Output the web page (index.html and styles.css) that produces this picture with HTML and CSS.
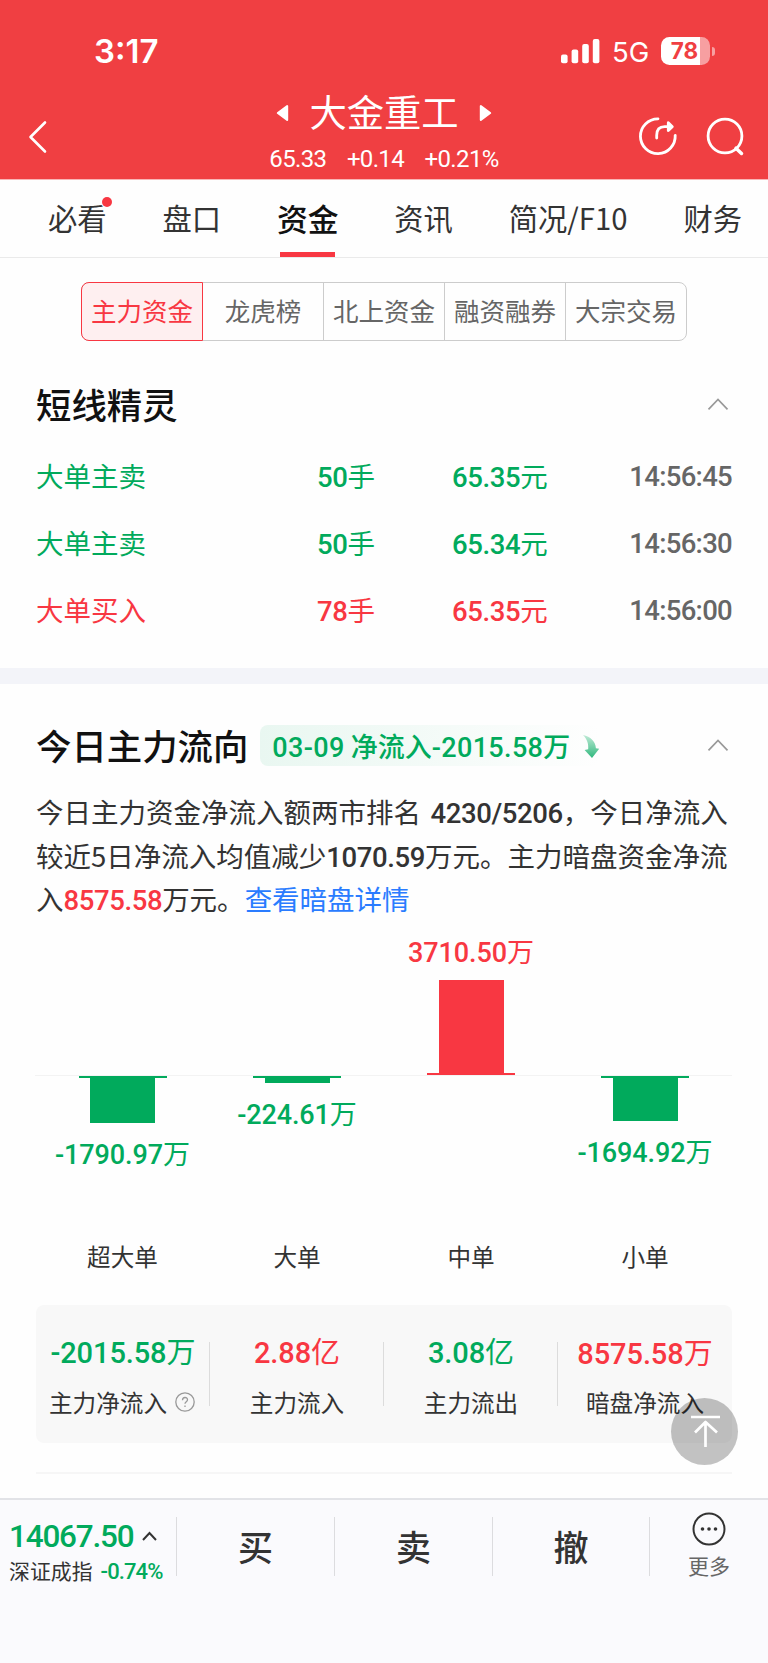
FILE: index.html
```html
<!DOCTYPE html>
<html lang="zh-CN">
<head>
<meta charset="utf-8">
<title>大金重工</title>
<link rel="stylesheet" href="styles.css">
</head>
<body>
<header class="header">
  <div class="status">
    <span class="clock">3:17</span>
    <div class="status-right">
      <svg class="signal" width="39" height="25" viewBox="0 0 39 25" fill="#fff"><rect x="0" y="15.5" width="6.6" height="8.7" rx="2"/><rect x="10.6" y="10.5" width="6.6" height="13.7" rx="2"/><rect x="21.2" y="5" width="6.6" height="19.2" rx="2"/><rect x="31.8" y="0" width="6.6" height="24.2" rx="2"/></svg>
      <span class="network">5G</span>
      <div class="battery"><span class="battery-body">78</span><span class="battery-nub"></span></div>
    </div>
  </div>
  <div class="titlebar">
    <svg class="back" width="20" height="34" viewBox="0 0 20 34" fill="none" stroke="#fff" stroke-width="2.6" stroke-linecap="round" stroke-linejoin="round"><path d="M17 2.5 2.5 17 17 31.5"/></svg>
    <div class="stock">
      <div class="stock-name">
        <svg width="13" height="18" viewBox="0 0 13 18" fill="#fff" stroke="#fff" stroke-width="2" stroke-linejoin="round"><path d="M11.2 2v14L1.8 9z"/></svg>
        <h1>大金重工</h1>
        <svg width="13" height="18" viewBox="0 0 13 18" fill="#fff" stroke="#fff" stroke-width="2" stroke-linejoin="round"><path d="M1.8 2v14l9.4-7z"/></svg>
      </div>
      <div class="quote"><span>65.33</span><span>+0.14</span><span>+0.21%</span></div>
    </div>
    <div class="tools">
      <svg width="40" height="40" viewBox="0 0 40 40" fill="none" stroke="#fff" stroke-width="2.8" stroke-linecap="round" stroke-linejoin="round"><path d="M20 2.8A17.4 17.4 0 1 0 37.2 19.3"/><path d="M18.7 22v-2.7c0-5.6 3-8.7 8-8.7h6"/><path d="M30.3 6.7 34.3 10.8 30.3 14.6z" fill="#fff"/></svg>
      <svg width="40" height="40" viewBox="0 0 40 40" fill="none" stroke="#fff" stroke-width="2.8" stroke-linecap="round"><circle cx="20" cy="20" r="16.9"/><path d="M31 32.2 36.5 37.5" stroke-width="3.5"/></svg>
    </div>
  </div>
</header>

<nav class="tabs">
  <a class="tab tab-new">必看</a><a class="tab">盘口</a><a class="tab tab-active">资金</a><a class="tab">资讯</a><a class="tab">简况/F10</a><a class="tab">财务</a>
</nav>

<div class="segments">
  <span class="segment segment-active">主力资金</span><span class="segment">龙虎榜</span><span class="segment">北上资金</span><span class="segment">融资融券</span><span class="segment">大宗交易</span>
</div>

<section class="alerts">
  <div class="section-head">
    <h2>短线精灵</h2>
    <svg class="chevron" width="22" height="14" viewBox="0 0 22 14" fill="none" stroke="#999" stroke-width="1.7"><path d="M1.5 12.3 11 2.5l9.5 9.8"/></svg>
  </div>
  <div class="row down"><span>大单主卖</span><span><b class="num">50</b>手</span><span><b class="num">65.35</b>元</span><span class="time num">14:56:45</span></div>
  <div class="row down"><span>大单主卖</span><span><b class="num">50</b>手</span><span><b class="num">65.34</b>元</span><span class="time num">14:56:30</span></div>
  <div class="row up"><span>大单买入</span><span><b class="num">78</b>手</span><span><b class="num">65.35</b>元</span><span class="time num">14:56:00</span></div>
</section>

<section class="flow">
  <div class="section-head">
    <h2>今日主力流向</h2>
    <div class="flow-badge"><span><b class="num">03-09</b> 净流入<b class="num">-2015.58</b>万</span>
      <svg width="18" height="25" viewBox="0 0 18 25"><defs><linearGradient id="drop" x1="0" y1="0" x2="0" y2="1"><stop offset="0" stop-color="#bfead6"/><stop offset="1" stop-color="#2fb87d"/></linearGradient></defs><path d="M1 1C8.5 2.5 13.6 7.5 13.9 14.2L17.2 14.8 10 24 2.6 16l3.6-.7C6.7 10 5.2 5 1 1z" fill="url(#drop)"/></svg>
    </div>
    <svg class="chevron" width="22" height="14" viewBox="0 0 22 14" fill="none" stroke="#999" stroke-width="1.7"><path d="M1.5 12.3 11 2.5l9.5 9.8"/></svg>
  </div>
  <div class="summary">
    <p>今日主力资金净流入额两市排名 <b class="num rank">4230/5206</b>，今日净流入</p>
    <p>较近5日净流入均值减少<b class="num">1070.59</b>万元。主力暗盘资金净流</p>
    <p>入<b class="num up">8575.58</b>万元。<a>查看暗盘详情</a></p>
  </div>

  <div class="chart">
    <div class="col down"><div class="above"></div><div class="below"><i class="cap"></i><i class="bar" style="height:45px"></i><span><b class="num">-1790.97</b>万</span></div><em>超大单</em></div>
    <div class="col down"><div class="above"></div><div class="below"><i class="cap"></i><i class="bar" style="height:5px"></i><span><b class="num">-224.61</b>万</span></div><em>大单</em></div>
    <div class="col up"><div class="above"><span><b class="num">3710.50</b>万</span><i class="bar" style="height:93px"></i><i class="cap"></i></div><div class="below"></div><em>中单</em></div>
    <div class="col down"><div class="above"></div><div class="below"><i class="cap"></i><i class="bar" style="height:43px"></i><span><b class="num">-1694.92</b>万</span></div><em>小单</em></div>
  </div>

  <div class="totals">
    <div class="total"><strong class="down"><b class="num">-2015.58</b>万</strong><span>主力净流入<svg width="20" height="20" viewBox="0 0 20 20" fill="none" stroke="#999" stroke-width="1.3"><circle cx="10" cy="10" r="9.2"/><path d="M7.5 8.2c0-3.6 5-3.5 5-.4 0 1.8-2.5 2-2.5 4M10 13.4v1.5"/></svg></span></div>
    <div class="total"><strong class="up"><b class="num">2.88</b>亿</strong><span>主力流入</span></div>
    <div class="total"><strong class="down"><b class="num">3.08</b>亿</strong><span>主力流出</span></div>
    <div class="total"><strong class="up"><b class="num">8575.58</b>万</strong><span>暗盘净流入</span></div>
  </div>
  <div class="rule"></div>
</section>

<button class="to-top"><svg width="32" height="34" viewBox="0 0 32 34" fill="none" stroke="#fff" stroke-width="2.7"><path d="M1 2h29M15.5 32V6.5M5 17.5 15.5 7 27 17.5" stroke-linejoin="round"/></svg></button>

<footer class="actions">
  <div class="index">
    <div class="index-value"><b class="num">14067.50</b><svg width="15" height="10" viewBox="0 0 15 10" fill="none" stroke="#333" stroke-width="2"><path d="M1 9 7.5 2 14 9"/></svg></div>
    <div class="index-name">深证成指<b class="num">-0.74%</b></div>
  </div>
  <a class="action">买</a><a class="action">卖</a><a class="action">撤</a>
  <a class="more"><svg width="34" height="34" viewBox="0 0 34 34"><circle cx="17" cy="17" r="15.5" fill="none" stroke="#333" stroke-width="2"/><g fill="#333"><circle cx="10.5" cy="17" r="1.8"/><circle cx="17" cy="17" r="1.8"/><circle cx="23.5" cy="17" r="1.8"/></g></svg><span>更多</span></a>
</footer>
</body>
</html>
```

FILE: styles.css
```css
* { box-sizing: border-box; }

body {
  margin: 0;
  width: 768px;
  height: 1663px;
  position: relative;
  overflow: hidden;
  display: flex;
  flex-direction: column;
  background: #fefefe;
  color: #333;
  font-family: "Noto Sans CJK SC", sans-serif;
  font-size: 27.5px;
  white-space: nowrap;
}

h1, h2, p { margin: 0; }
i, em { font-style: normal; }
svg { display: block; flex: none; }

.num {
  font-family: Roboto, "Noto Sans CJK SC", sans-serif;
  font-weight: 500;
  letter-spacing: -0.4px;
}
b.num { line-height: 0; }
.up { color: #f83742; }
.down { color: #01aa5c; }

.header {
  height: 180px;
  flex: none;
  background: #f03f42;
  border-bottom: 1px solid #f9b5b6;
  color: #fff;
}
.status {
  height: 90px;
  padding: 12px 53px 0 94px;
  display: flex;
  align-items: center;
  justify-content: space-between;
  font-family: Inter, sans-serif;
}
.clock { font-size: 33px; font-weight: 600; line-height: 40px; }
.status-right { display: flex; align-items: center; }
.network { margin-left: 12px; font-size: 27.5px; line-height: 34px; width: 49px; padding-top: 2px; }
.battery { display: flex; align-items: center; }
.battery-body {
  width: 49px;
  height: 28px;
  padding-right: 2px;
  border-radius: 8.5px;
  background: linear-gradient(90deg, #fff 39px, #f79fa1 39px);
  color: #f03f42;
  font-size: 22.5px;
  font-weight: 700;
  line-height: 28px;
  text-align: center;
}
.battery-nub { width: 3px; height: 9px; margin-left: 2px; border-radius: 0 4px 4px 0; background: #f79fa1; }

.titlebar {
  height: 89px;
  display: grid;
  grid-template-columns: 200px 1fr 200px;
}
.back { margin: 30px 0 0 28px; }
.stock { display: flex; flex-direction: column; align-items: center; }
.stock-name { display: flex; align-items: center; gap: 20px; height: 45px; }
.stock-name h1 { font-size: 37.3px; font-weight: 400; line-height: 46px; padding-bottom: 3px; }
.quote {
  display: flex;
  gap: 20.5px;
  margin-top: 9px;
  font: 400 24px/30px Roboto, sans-serif;
  letter-spacing: -0.65px;
}
.tools { display: flex; gap: 27px; padding: 26px 0 0 69.5px; }

.tabs {
  height: 78px;
  flex: none;
  display: flex;
  justify-content: space-between;
  padding: 0 26px 0 48px;
  border-bottom: 1px solid #eaeaea;
  font-size: 29.3px;
  line-height: 75px;
}
.tab { position: relative; height: 78px; }
.tab-new::after {
  content: "";
  position: absolute;
  top: 17px;
  right: -5px;
  width: 10px;
  height: 10px;
  border-radius: 50%;
  background: #f83742;
}
.tab-active { font-size: 30.8px; font-weight: 500; color: #111; }
.tab-active::after {
  content: "";
  position: absolute;
  left: 3px;
  bottom: 1px;
  width: 55px;
  height: 5px;
  background: #f83742;
}

.segments {
  flex: none;
  display: flex;
  width: 606px;
  height: 59px;
  margin: 24px 0 0 81px;
  border: 1px solid #ccc;
  border-radius: 8px;
  color: #666;
  font-size: 25.5px;
  line-height: 54px;
}
.segment { flex: 1; text-align: center; border-left: 1px solid #ccc; }
.segment-active {
  margin: -1px 0;
  margin-left: -1px;
  border: 1px solid #f83742;
  border-radius: 8px 0 0 8px;
  background: #feeff0;
  color: #f83742;
}
.segment-active + .segment { border-left: 0; }

.section-head { display: flex; align-items: center; height: 50px; padding-right: 3px; }
.section-head h2 { font-size: 35.4px; font-weight: 500; line-height: 50px; padding-bottom: 1px; color: #111; }
.chevron { margin-left: auto; }

.alerts { flex: none; height: 343px; padding: 38px 36px 0; border-bottom: 16px solid #f3f4f9; }
.alerts .section-head { margin-bottom: 13px; }
.row {
  display: grid;
  grid-template-columns: 281px 135px 1fr auto;
  height: 67px;
  line-height: 67px;
}
.time { color: #666; letter-spacing: -0.7px; padding-top: 1px; }

.flow { flex: none; height: 814px; padding: 36px 36px 0; }
.flow-badge {
  display: flex;
  align-items: center;
  gap: 12px;
  height: 41px;
  margin-left: 12px;
  padding: 0 0 0 12px;
  border-radius: 8px;
  background: linear-gradient(90deg, #e9f7f1, #fefefe);
  color: #01aa5c;
  font-size: 27px;
  font-weight: 500;
  line-height: 41px;
}
.flow-badge .num { letter-spacing: 0.35px; }
.flow-badge svg { margin-top: 2px; }
.summary { margin-top: 20px; line-height: 43.5px; }
.summary a { color: #2a7cff; }
.rank { margin-left: 3.4px; }

.chart { display: grid; grid-template-columns: repeat(4, 1fr); margin-top: 12px; }
.col { display: flex; flex-direction: column; align-items: center; }
.col:first-child { margin-left: -1px; }
.above, .below { width: 100%; display: flex; flex-direction: column; align-items: center; }
.above { height: 143px; justify-content: flex-end; border-bottom: 1px solid #f3f3f3; }
.below { height: 160px; }
.cap { width: 88px; height: 2px; flex: none; background: currentColor; }
.bar { width: 65px; flex: none; background: currentColor; }
.chart span { line-height: 30px; font-size: 27px; }
.chart .num { letter-spacing: -0.1px; }
.below span { margin-top: 15px; }
.above span { margin-bottom: 14px; }
.chart em { font-size: 23.6px; line-height: 40px; color: #333; }

.totals {
  display: grid;
  grid-template-columns: repeat(4, 1fr);
  height: 138px;
  margin-top: 29px;
  padding: 23px 0;
  border-radius: 8px;
  background: #f8f8f8;
}
.total {
  display: flex;
  flex-direction: column;
  align-items: center;
  background: linear-gradient(#dcdcdc, #dcdcdc) right 14px / 1px 64px no-repeat;
}
.total:last-child { background: none; }
.total strong { font-size: 29px; font-weight: 400; line-height: 44px; }
.total:last-child strong { padding-top: 1px; margin-bottom: -1px; }
.total span { display: flex; align-items: center; gap: 8px; font-size: 23.6px; line-height: 30px; margin-top: 15px; }
.total:first-child span { padding-right: 2px; }
.total .num { letter-spacing: -0.1px; }
.rule { height: 2px; margin-top: 29px; background: #f6f6f6; }

.to-top {
  position: absolute;
  left: 671px;
  top: 1398px;
  width: 67px;
  height: 67px;
  padding: 0 0 0 2px;
  border: 0;
  border-radius: 50%;
  background: rgba(0, 0, 0, 0.235);
  display: flex;
  align-items: center;
  justify-content: center;
}

.actions {
  flex: none;
  height: 165px;
  display: grid;
  grid-template-columns: 177px 158px 158px 157px 118px;
  padding-top: 17px;
  border-top: 2px solid #e2e3e7;
  background: #fafafd;
}
.index, .action {
  height: 59px;
  border-right: 1px solid #dcdcdf;
}
.index { padding-left: 9px; }
.index-value { display: flex; align-items: center; gap: 9px; height: 40px; margin-top: -1px; font-size: 31.5px; color: #01aa5c; }
.index-value .num { letter-spacing: -1.2px; padding-top: 1px; }
.index-name { display: flex; gap: 8px; align-items: center; font-size: 20.9px; line-height: 28px; }
.index-name .num { font-size: 22px; letter-spacing: -0.9px; color: #01aa5c; padding-top: 3px; }
.action { font-size: 35px; font-weight: 500; line-height: 58px; text-align: center; }
.more { display: flex; flex-direction: column; align-items: center; margin-top: -5px; color: #666; font-size: 21px; line-height: 30px; }
.more span { margin-top: 4px; }
```
